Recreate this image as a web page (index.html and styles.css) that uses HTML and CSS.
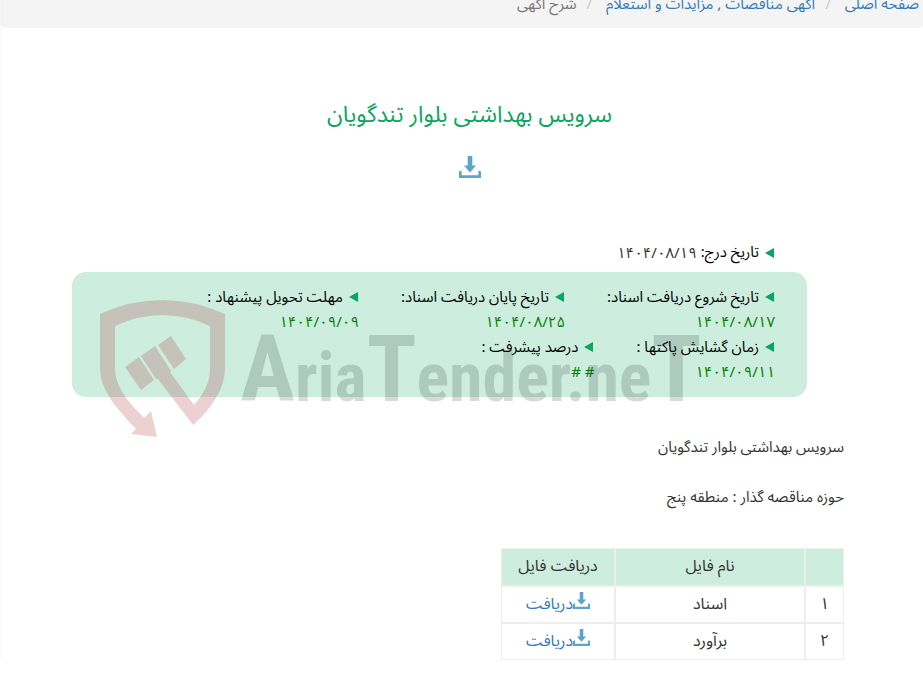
FILE: index.html
```html
<!DOCTYPE html>
<html lang="fa" dir="rtl">
<head>
  <meta charset="UTF-8">
  <meta name="viewport" content="width=device-width, initial-scale=1.0">
  <title>سرویس بهداشتی بلوار تندگویان</title>
  <link rel="stylesheet" href="styles.css">
</head>
<body>
  <svg class="sprite" aria-hidden="true">
    <symbol id="download" viewBox="0 0 22 22">
      <path d="M8.7 0h4.6v9.6H17L11 16.6 5 9.6h3.7zM0 15.4l2.6-.8v4.6h16.8v-4.6l2.6.8V22H0z"/>
    </symbol>
  </svg>

  <nav class="breadcrumb">
    <a href="#">صفحه اصلی</a>
    <a href="#">آگهی مناقصات , مزایدات و استعلام</a>
    <span>شرح آگهی</span>
  </nav>

  <main class="page">
    <h1 class="title">سرویس بهداشتی بلوار تندگویان</h1>
    <a class="main-download" href="#" aria-label="دریافت"><svg class="icon"><use href="#download"/></svg></a>

    <p class="posted"><span class="label">تاریخ درج:</span> ۱۴۰۴/۰۸/۱۹</p>

    <section class="dates">
      <div class="date-item"><span class="label">تاریخ شروع دریافت اسناد:</span><span class="value">۱۴۰۴/۰۸/۱۷</span></div>
      <div class="date-item"><span class="label">تاریخ پایان دریافت اسناد:</span><span class="value">۱۴۰۴/۰۸/۲۵</span></div>
      <div class="date-item"><span class="label">مهلت تحویل پیشنهاد :</span><span class="value">۱۴۰۴/۰۹/۰۹</span></div>
      <div class="date-item"><span class="label">زمان گشایش پاکتها :</span><span class="value">۱۴۰۴/۰۹/۱۱</span></div>
      <div class="date-item"><span class="label">درصد پیشرفت :</span><span class="value"># #</span></div>

      <div class="watermark" dir="ltr">
        <svg class="shield" viewBox="0 0 126 138">
          <path d="M0 14Q62-14 125 14V68C125 91 108 112 93 125L58 79 56 79 41 56 55 46 71 71 70 72 94 105C104 94 110 82 110 69V26Q62 4 15 26V69C15 87 30 104 44 118L51 111 57 137 31 134 36 129C19 111 0 91 0 68Z"/>
          <path d="M25 67l14-10 15 23-13 10zM58 45l13-9 15 23-12 10z"/>
        </svg>
        <span class="brand"><span class="brand-cap">A</span>ria<span class="brand-cap">T</span>ender.ne<span class="brand-cap">T</span></span>
      </div>
    </section>

    <p class="text">سرویس بهداشتی بلوار تندگویان</p>
    <p class="text">حوزه مناقصه گذار : منطقه پنج</p>

    <table class="files">
      <thead>
        <tr><th class="col-num"></th><th class="col-name">نام فایل</th><th class="col-get">دریافت فایل</th></tr>
      </thead>
      <tbody>
        <tr><td>۱</td><td>اسناد</td><td><a href="#"><svg class="icon"><use href="#download"/></svg>دریافت</a></td></tr>
        <tr><td>۲</td><td>برآورد</td><td><a href="#"><svg class="icon"><use href="#download"/></svg>دریافت</a></td></tr>
      </tbody>
    </table>
  </main>
</body>
</html>
```
FILE: styles.css
```css
* {
  box-sizing: border-box;
}

body {
  margin: 0;
  font-family: "Noto Sans Arabic", "DejaVu Sans", sans-serif;
  font-size: 15px;
  line-height: 25px;
  color: #333;
  background: #fff;
  border-left: 1px solid #f8f8f8;
  overflow: hidden;
}

a {
  color: #337ab7;
  text-decoration: none;
}

.sprite {
  display: none;
}

.icon {
  width: 22px;
  height: 22px;
  fill: #5ba5c9;
}

.breadcrumb {
  margin-top: -8px;
  height: 36px;
  padding: 0 4px;
  background: #f4f4f4;
  border-radius: 0 0 4px 4px;
  color: #777;
}

.breadcrumb > * + *::before {
  content: "/";
  padding: 0 10px;
  color: #ccc;
}

.page {
  padding: 67px 79px 0 94px;
}

.title {
  margin: 0;
  font-size: 23px;
  font-weight: normal;
  line-height: 40px;
  text-align: center;
  color: #0aa55f;
}

.main-download {
  display: block;
  height: 22px;
  margin-top: 21px;
  text-align: center;
  line-height: 22px;
}

.posted {
  margin: 62px 69px 6px 0;
}

.label {
  display: flex;
  align-items: center;
  gap: 6px;
  color: #000;
}

.posted .label {
  display: inline-flex;
}

.label::before {
  content: "";
  border: 5px solid transparent;
  border-right: 9px solid #0aa55f;
  border-left: 0;
  margin-right: 1px;
}

.dates {
  position: relative;
  display: flex;
  flex-wrap: wrap;
  column-gap: 42px;
  margin: 0 37px 38px -23px;
  padding: 13px 32px 12px;
  background: #cdeddf;
  border-radius: 14px;
}

.value {
  display: block;
  color: #008000;
}

/* logo laid over the panel, runs past its bottom edge */
.watermark {
  position: absolute;
  left: 28px;
  top: 28px;
  display: flex;
  pointer-events: none;
}

.shield {
  width: 126px;
  height: 138px;
  fill: rgba(168, 41, 50, 0.22);
}

.brand {
  margin: 28px 0 0 14px;
  font-family: "Liberation Sans Narrow", "Roboto Condensed", Roboto, sans-serif;
  font-size: 68px;
  font-weight: bold;
  line-height: 84px;
  white-space: nowrap;
  color: rgba(0, 0, 0, 0.15);
}

.brand-cap {
  font-size: 92px;
}

.text {
  margin: 0 0 25px;
}

.files {
  margin-top: 38px;
  border: 0;
  border-spacing: 0;
  font-size: 16px;
  text-align: center;
}

.files th,
.files td {
  height: 37px;
  padding: 5px;
  border: 1px solid #eee;
  font-weight: normal;
}

.files th {
  height: 38px;
  background: #cdeddf;
}

.files .icon {
  width: 17px;
  height: 17px;
}

.files .col-num {
  width: 39px;
}

.files .col-name {
  width: 190px;
}

.files .col-get {
  width: 114px;
}
```
